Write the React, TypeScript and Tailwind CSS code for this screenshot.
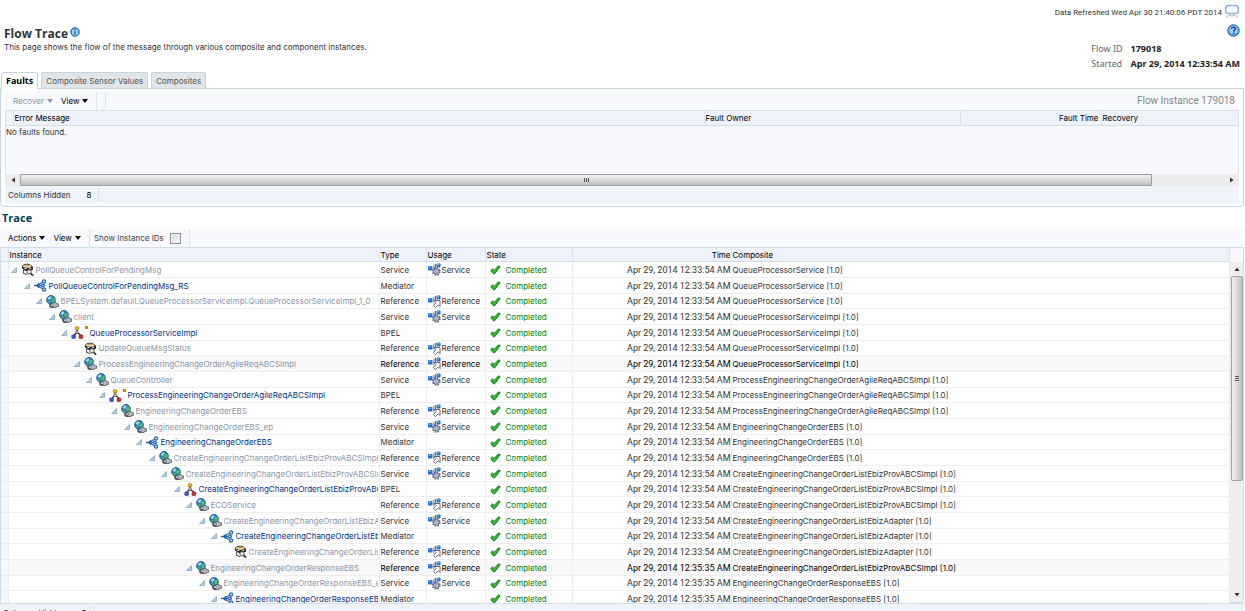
import { useState } from 'react';
import type { ReactNode } from 'react';

type IconKind = 'adapter' | 'mediator' | 'globe' | 'bpel';

interface TraceRow {
  level: number;
  icon: IconKind;
  name: string;
  type: 'Service' | 'Reference' | 'Mediator' | 'BPEL';
  composite: string;
  leaf?: boolean;
  starred?: boolean;
  shaded?: boolean;
  time?: string;
}

const PROV = 'CreateEngineeringChangeOrderListEbizProvABCSImpl';
const ADAPTER = 'CreateEngineeringChangeOrderListEbizAdapter';
const REQ = 'ProcessEngineeringChangeOrderAgileReqABCSImpl';

const rows: TraceRow[] = [
  { level: 0, icon: 'adapter', name: 'PollQueueControlForPendingMsg', type: 'Service', composite: 'QueueProcessorService' },
  { level: 1, icon: 'mediator', name: 'PollQueueControlForPendingMsg_RS', type: 'Mediator', composite: 'QueueProcessorService' },
  { level: 2, icon: 'globe', name: 'BPELSystem.default.QueueProcessorServiceImpl.QueueProcessorServiceImpl_1_0', type: 'Reference', composite: 'QueueProcessorService' },
  { level: 3, icon: 'globe', name: 'client', type: 'Service', composite: 'QueueProcessorServiceImpl' },
  { level: 4, icon: 'bpel', name: 'QueueProcessorServiceImpl', type: 'BPEL', composite: 'QueueProcessorServiceImpl', starred: true },
  { level: 5, icon: 'adapter', name: 'UpdateQueueMsgStatus', type: 'Reference', composite: 'QueueProcessorServiceImpl', leaf: true },
  { level: 5, icon: 'globe', name: REQ, type: 'Reference', composite: 'QueueProcessorServiceImpl', shaded: true },
  { level: 6, icon: 'globe', name: 'QueueController', type: 'Service', composite: REQ },
  { level: 7, icon: 'bpel', name: REQ, type: 'BPEL', composite: REQ, starred: true },
  { level: 8, icon: 'globe', name: 'EngineeringChangeOrderEBS', type: 'Reference', composite: REQ },
  { level: 9, icon: 'globe', name: 'EngineeringChangeOrderEBS_ep', type: 'Service', composite: 'EngineeringChangeOrderEBS' },
  { level: 10, icon: 'mediator', name: 'EngineeringChangeOrderEBS', type: 'Mediator', composite: 'EngineeringChangeOrderEBS' },
  { level: 11, icon: 'globe', name: PROV, type: 'Reference', composite: 'EngineeringChangeOrderEBS' },
  { level: 12, icon: 'globe', name: PROV, type: 'Service', composite: PROV },
  { level: 13, icon: 'bpel', name: PROV, type: 'BPEL', composite: PROV },
  { level: 14, icon: 'globe', name: 'ECOService', type: 'Reference', composite: PROV },
  { level: 15, icon: 'globe', name: ADAPTER, type: 'Service', composite: ADAPTER },
  { level: 16, icon: 'mediator', name: ADAPTER, type: 'Mediator', composite: ADAPTER },
  { level: 17, icon: 'adapter', name: ADAPTER, type: 'Reference', composite: ADAPTER, leaf: true },
  { level: 14, icon: 'globe', name: 'EngineeringChangeOrderResponseEBS', type: 'Reference', composite: PROV, shaded: true, time: '12:35:35' },
  { level: 15, icon: 'globe', name: 'EngineeringChangeOrderResponseEBS_ep', type: 'Service', composite: 'EngineeringChangeOrderResponseEBS', time: '12:35:35' },
  { level: 16, icon: 'mediator', name: 'EngineeringChangeOrderResponseEBS', type: 'Mediator', composite: 'EngineeringChangeOrderResponseEBS', time: '12:35:35' },
];

const icons: Record<IconKind, ReactNode> = {
  adapter: (
    <>
      <ellipse cx="6" cy="4" rx="4.6" ry="2.8" fill="#e9e2cf" stroke="#4a4234" />
      <path d="M3.5 2.6h5" stroke="#d8a21c" strokeWidth="1.2" />
      <path d="M.6 3.6c3 1.6 8 1.6 11.4-.4v3.4c-1.6 1.4-3.4 1-4.4 0-1.2 1.6-3.6 1.8-4.8.2C1.600 6 .9 5 .6 3.600z" fill="#2b2723" />
      <path d="M3.400 5.500h2M8.400 5.200h1.800" stroke="#fff" strokeWidth="1.100" />
      <path d="M2.500 7v3.200L6 11.800" stroke="#5c574f" strokeWidth="1.200" fill="none" />
      <circle cx="8" cy="8.800" r="2.200" fill="#e8e8e8" stroke="#55504a" />
      <path d="M9.600 10.300l2.500 2.400" stroke="#3b3733" strokeWidth="1.800" />
    </>
  ),
  mediator: (
    <>
      <path d="M0 6.500h4" stroke="#1d5ca8" strokeWidth="1.300" />
      <path d="M5.200 3.500L1.600 6.500 5.200 9.500z" fill="#1d5ca8" />
      <path d="M4 6L9.500 2.500M5 6.500h4.500M4 7l5.500 3.500" stroke="#2f6fb8" strokeWidth="1.300" />
      <g fill="#cfe3f7" stroke="#2465b0" strokeWidth="1.200">
        <circle cx="10" cy="2.500" r="1.600" />
        <circle cx="9" cy="6.500" r="1.400" />
        <circle cx="10" cy="10.500" r="1.600" />
      </g>
    </>
  ),
  globe: (
    <>
      <circle cx="5" cy="4.800" r="4.300" fill="#2c84b8" stroke="#1e5f86" />
      <path d="M1.500 3.600c1-2 2.600-2.400 3.800-2L5 3.400 3.500 5z" fill="#9be0f2" />
      <path d="M5.600 3.600l2.800-.6c.6 1.600 0 3.300-1.200 4.200L5.400 6z" fill="#62bb5a" />
      <path d="M2 6l2 .4.600 1.800C3.300 8 2.400 7.300 2 6z" fill="#62bb5a" />
      <path d="M4.200 8.400v2.200c0 1 .6 1.400 1.600 1.400h3" stroke="#55585c" strokeWidth="2" fill="none" />
      <path d="M7 7.500h3.200v1.300h2.300v2.600h-2.300v1.100H7z" fill="#b9bcbf" stroke="#5b5e61" strokeWidth=".8" />
    </>
  ),
  bpel: (
    <>
      <path d="M6 3v3M6 6L2.800 9.500M6 6l4 3.500" stroke="#333" strokeWidth="1.200" fill="none" />
      <rect x="4.300" y=".8" width="3.400" height="3" rx=".6" fill="#f2b90f" stroke="#a67606" strokeWidth=".7" />
      <circle cx="6" cy="6.200" r="1.300" fill="#fff" stroke="#444" strokeWidth=".8" />
      <rect x=".8" y="9" width="3.600" height="3.400" rx=".6" fill="#3b62e0" stroke="#2340a0" strokeWidth=".7" />
      <rect x="8.100" y="9" width="3.600" height="3.400" rx=".6" fill="#d93030" stroke="#951717" strokeWidth=".7" />
    </>
  ),
};

function UsageIcon({ kind }: { kind: 'Service' | 'Reference' }) {
  return (
    <svg viewBox="0 0 13 13" className="size-[13px] shrink-0" aria-hidden="true">
      <rect x="0" y="3" width="4.500" height="4.500" rx=".8" fill="#1f73d6" />
      <rect x="1" y="3.500" width="1.500" height="1.500" fill="#8fc1f5" />
      <path d="M5 2h1.300v6.500H5z" fill="#d9a826" />
      <path d="M6.800 1h1.300v6H6.800z" fill="#7c6a35" />
      <rect x="8.600" y=".4" width="3.900" height="4.200" rx=".8" fill="#1f73d6" />
      <rect x="9.400" y=".9" width="1.500" height="1.500" fill="#8fc1f5" />
      {kind === 'Service' ? (
        <>
          <circle cx="8.300" cy="8.500" r="3.600" fill="none" stroke="#5d6480" strokeWidth="1.500" strokeDasharray="1.600 1.230" />
          <circle cx="8.300" cy="8.500" r="2.700" fill="#d5d9e6" stroke="#5d6480" />
          <circle cx="8.300" cy="8.500" r="1" fill="#fff" stroke="#5d6480" strokeWidth=".7" />
        </>
      ) : (
        <path d="M6 5.500h6v6l-1.700-1.700L7.500 12.600 5.500 10.600 8 7.700z" fill="#fff" stroke="#555a63" strokeWidth=".9" />
      )}
    </svg>
  );
}

function CheckIcon() {
  return (
    <svg viewBox="0 0 11 11" className="size-[11px] shrink-0" aria-hidden="true">
      <path d="M.8 6.500l1.800-1.500 1.500 1.400L8.600 1.800l1.500.9L4.700 9.800 3.300 9.800z" fill="#22c522" stroke="#15661a" strokeWidth=".9" strokeLinejoin="round" />
    </svg>
  );
}

function Caret() {
  return (
    <svg viewBox="0 0 6 4" className="h-1 w-1.5" aria-hidden="true">
      <path d="M0 0h6L3 4z" fill="currentColor" />
    </svg>
  );
}

function MenuButton({ label, disabled }: { label: string; disabled?: boolean }) {
  return (
    <button disabled={disabled} className="flex items-center gap-[3px] text-black disabled:text-[#8c96a8]">
      {label}
      <Caret />
    </button>
  );
}

function Arrow({ className }: { className: string }) {
  return (
    <svg viewBox="0 0 6 6" className={className} aria-hidden="true">
      <path d="M.5 5L3 1.500 5.500 5z" fill="#333" />
    </svg>
  );
}

function InstanceCell({ row }: { row: TraceRow }) {
  const linked = row.icon === 'bpel' || row.icon === 'mediator';
  return (
    <div className="mr-px flex items-center overflow-hidden" style={{ paddingLeft: Math.round(row.level * 12.5) + 1 }}>
      {row.leaf ? (
        <span className="w-1.5 shrink-0" />
      ) : (
        <button aria-label={`Collapse ${row.name}`} className="shrink-0">
          <svg viewBox="0 0 6 6" className="size-1.5">
            <path d="M5.500.5v5h-5z" fill="#b4cde0" stroke="#86a8c4" strokeWidth=".8" />
          </svg>
        </button>
      )}
      <svg viewBox="0 0 13 13" className="ml-1 size-[13px] shrink-0" aria-hidden="true">
        {icons[row.icon]}
      </svg>
      {row.starred && <span className="ml-px size-[3px] shrink-0 self-start bg-[#f07800]" />}
      {linked ? (
        <a href="#" className="ml-0.5 min-w-0 overflow-hidden text-[#003286]">{row.name}</a>
      ) : (
        <span className="ml-0.5 min-w-0 overflow-hidden text-[#8c96a8]">{row.name}</span>
      )}
    </div>
  );
}

const tabs = ['Faults', 'Composite Sensor Values', 'Composites'];

export default function App() {
  const [activeTab, setActiveTab] = useState('Faults');
  const [showIds, setShowIds] = useState(false);

  return (
    <div className="h-screen overflow-hidden bg-white font-['Inter','Noto_Sans',sans-serif] text-[8px] leading-3 whitespace-nowrap text-[#333]">
      <header className="flex h-[72px] justify-between pr-[5px] pl-1">
        <div className="pt-[27px]">
          <h1 className="flex items-center gap-0.5 font-['Open_Sans',sans-serif] text-[12px] leading-[14px] font-bold">
            Flow Trace
            <svg viewBox="0 0 10 10" className="mb-1 size-2.5" aria-hidden="true">
              <circle cx="5" cy="5" r="4.300" fill="#4fa0e8" stroke="#2b6fbd" />
              <circle cx="5" cy="5" r="3" fill="#a8d5fa" />
              <path d="M5 2.300v1.200M5 4.300v3.200" stroke="#11479b" strokeWidth="1.300" />
            </svg>
          </h1>
          <p>This page shows the flow of the message through various composite and component instances.</p>
        </div>
        <div className="flex flex-col items-end pt-[3px]">
          <div className="flex h-4 items-end gap-0.5 font-['Roboto',sans-serif]">
            Data Refreshed Wed Apr 30 21:40:06 PDT 2014
            <svg viewBox="0 0 16 15" className="h-[15px] w-4" fill="none" aria-hidden="true">
              <rect x="1.500" y="1.500" width="13" height="8" rx="3" stroke="#8fb1dc" strokeWidth="1.500" />
              <path d="M2 13.500l2.500-2h7l2.500 2" stroke="#c8c8c8" strokeWidth="1.300" />
            </svg>
          </div>
          <button aria-label="Help" className="mt-[5px]">
            <svg viewBox="0 0 13 13" className="size-[13px]">
              <circle cx="6.500" cy="6.500" r="5.700" fill="#4a9fe8" stroke="#2a5fa5" />
              <circle cx="6.500" cy="6" r="4.200" fill="#9dd0fa" />
              <path d="M4.600 5c0-2.600 4-2.400 3.900-.2C8.500 6.200 6.600 6 6.600 7.700" fill="none" stroke="#0b3f96" strokeWidth="1.400" />
              <rect x="5.900" y="8.600" width="1.500" height="1.500" fill="#0b3f96" />
            </svg>
          </button>
          <dl className="mt-1 grid grid-cols-[auto_auto] gap-x-2 font-['Noto_Sans',sans-serif] text-[9px] leading-[15px]">
            <dt className="text-[#666]">Flow ID</dt>
            <dd className="font-bold text-[#222]">179018</dd>
            <dt className="text-[#666]">Started</dt>
            <dd className="font-bold text-[#222]">Apr 29, 2014 12:33:54 AM</dd>
          </dl>
        </div>
      </header>

      <div role="tablist" className="relative flex gap-[3px] pl-px">
        {tabs.map((tab) => (
          <button
            key={tab}
            role="tab"
            aria-selected={tab === activeTab}
            onClick={() => setActiveTab(tab)}
            className={
              tab === activeTab
                ? "-mb-px h-[17px] rounded-t-xs border border-b-0 border-[#c5d4de] bg-white px-1 font-['Noto_Sans',sans-serif] text-[9px] font-bold text-black"
                : 'h-4 rounded-t-xs border border-b-0 border-[#c5d4de] bg-[#dfe5e9] px-1 text-[#555]'
            }
          >
            {tab}
          </button>
        ))}
      </div>

      <section className="mr-px rounded-b-sm border border-[#c5d4de] px-1 py-[3px]">
        <div className="flex h-[18px] items-center bg-[#f7f9fd] pl-2">
          <div className="flex items-center gap-2">
            <MenuButton label="Recover" disabled />
            <MenuButton label="View" />
          </div>
          <span className="ml-2 h-full w-2.5 border-x border-[#dde5ee]" />
          <span className="ml-auto pr-1 font-['Roboto',sans-serif] text-[10px] text-[#888]">Flow Instance 179018</span>
        </div>
        <div className="h-16 border-x border-[#dbe5ec] bg-[#f7f9fe]">
          <table className="w-full table-fixed">
            <colgroup>
              <col className="w-[7px]" />
              <col />
              <col className="w-[256px]" />
              <col className="w-[141px]" />
              <col className="w-[137px]" />
            </colgroup>
            <thead>
              <tr className="h-[15px] border-y border-[#d3dfe8] bg-[#eef2fa] text-black">
                <td />
                <th className="border-x border-[#d9e3ec] p-0 pl-px text-left font-normal">Error Message</th>
                <th className="p-0 pl-px text-left font-normal">Fault Owner</th>
                <th className="border-x border-[#d9e3ec] p-0 pr-0.5 text-right font-normal">Fault Time</th>
                <th className="p-0 pl-px text-left font-normal">Recovery</th>
              </tr>
            </thead>
          </table>
          <p>No faults found.</p>
        </div>
        <div className="flex h-3 items-center bg-[#ececec]">
          <span className="flex w-[15px] justify-center">
            <Arrow className="size-1.5 -rotate-90" />
          </span>
          <span className="flex h-full flex-1 items-center justify-center gap-px border border-[#a2a2a2] bg-linear-to-b from-[#f2f2f2] via-[#dcdcdc] to-[#c0c0c0]">
            <i className="h-1 w-px bg-[#555]" />
            <i className="h-1 w-px bg-[#555]" />
            <i className="h-1 w-px bg-[#555]" />
          </span>
          <span className="flex w-[87px] justify-end pr-1">
            <Arrow className="size-1.5 rotate-90" />
          </span>
        </div>
        <div className="flex h-[17px] items-center bg-[#eff3fa] pl-[3px]">
          Columns Hidden
          <span className="ml-4 flex h-3.5 w-3 items-center border-r border-[#d5e0ea] text-black">8</span>
        </div>
      </section>

      <h2 className="pt-1 pl-0.5 font-['Open_Sans',sans-serif] text-[11px] leading-[14px] font-bold text-[#003d5b]">Trace</h2>

      <section className="mt-1 mr-px">
        <div className="flex h-[18px] items-center bg-[#f7f9fd] pl-2">
          <div className="flex items-center gap-2">
            <MenuButton label="Actions" />
            <MenuButton label="View" />
          </div>
          <label className="ml-2 flex h-full items-center gap-1.5 border-x border-[#dde5ee] pr-2 pl-1 text-[#444]">
            Show Instance IDs
            <input
              type="checkbox"
              checked={showIds}
              onChange={(e) => setShowIds(e.target.checked)}
              className="size-[11px] appearance-none border border-[#8e8f8f] bg-linear-to-br from-[#d0d3d6] to-white shadow-[inset_0_0_0_1px_#f4f4f4] checked:bg-[#4a7ebb]"
            />
          </label>
        </div>

        <div className="flex h-[357px] items-start overflow-hidden border-b border-l border-[#d3dfe8]">
          <table className="w-full min-w-0 flex-1 table-fixed">
            <colgroup>
              <col className="w-[7px]" />
              <col className="w-[371px]" />
              <col className="w-[47px]" />
              <col className="w-[59px]" />
              <col className="w-[87px]" />
              <col className="w-[159px]" />
              <col />
            </colgroup>
            <thead>
              <tr className="h-3.5 border-y border-[#d3dfe8] bg-[#eef2fa] text-left text-black *:border-r *:border-[#d9e3ec] *:p-0 *:pl-px *:font-normal">
                <td />
                <th>Instance</th>
                <th>Type</th>
                <th>Usage</th>
                <th>State</th>
                <th className="pr-0.5 text-right">Time</th>
                <th>Composite</th>
              </tr>
            </thead>
            <tbody>
              {rows.map((row, i) => (
                <tr
                  key={i}
                  className={`h-4 border-b border-[#efefef] *:overflow-hidden *:border-r *:border-[#e9eef3] *:p-0 *:pl-px nth-[3n]:h-[15px] ${row.shaded ? 'bg-[#f8f8f8] text-black' : ''}`}
                >
                  <td className="bg-[#f5f8fc]" />
                  <td>
                    <InstanceCell row={row} />
                  </td>
                  <td>{row.type}</td>
                  <td>
                    {(row.type === 'Service' || row.type === 'Reference') && (
                      <span className="flex items-center gap-px">
                        <UsageIcon kind={row.type} />
                        {row.type}
                      </span>
                    )}
                  </td>
                  <td>
                    <span className="flex items-center gap-[5px] pl-[3px] text-[#008000]">
                      <CheckIcon />
                      Completed
                    </span>
                  </td>
                  <td className="pr-0.5 text-right font-['Roboto',sans-serif] text-[9px]">Apr 29, 2014 {row.time ?? '12:33:54'} AM</td>
                  <td>{row.composite} [1.0]</td>
                </tr>
              ))}
            </tbody>
          </table>
          <div className="flex h-full w-[14px] shrink-0 flex-col items-center border-y border-r border-[#d3dfe8] bg-[#eeeeee]">
            <span className="h-[14px] w-full shrink-0 bg-[#f7f9fd]" />
            <Arrow className="my-1 size-1.5 shrink-0" />
            <span className="flex h-[58%] w-3 flex-col items-center justify-center gap-px rounded-xs border border-[#a2a2a2] bg-linear-to-r from-[#f2f2f2] via-[#dcdcdc] to-[#c0c0c0]">
              <i className="h-px w-1 bg-[#555]" />
              <i className="h-px w-1 bg-[#555]" />
              <i className="h-px w-1 bg-[#555]" />
            </span>
            <Arrow className="mt-auto mb-1 size-1.5 rotate-180" />
          </div>
        </div>
        <div className="flex h-[17px] items-center bg-[#eff3fa] pl-[3px]">
          Columns Hidden
          <span className="ml-4 flex h-3.5 w-3 items-center border-r border-[#d5e0ea] text-black">5</span>
        </div>
      </section>
    </div>
  );
}
